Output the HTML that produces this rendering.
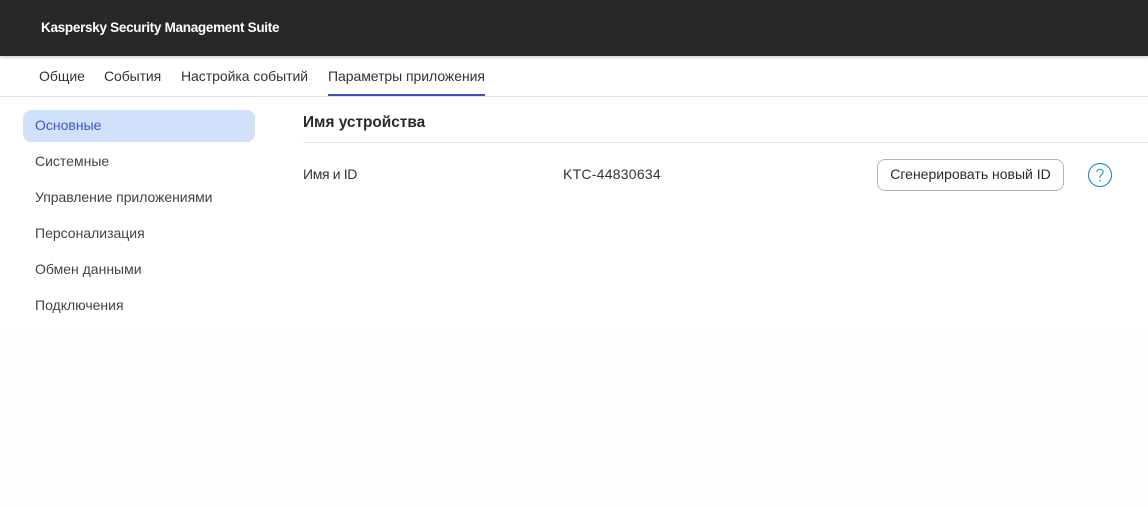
<!DOCTYPE html>
<html><head><meta charset="utf-8">
<style>
html,body{margin:0;padding:0;width:1148px;height:507px;overflow:hidden;background:#fdfdfd;font-family:"Liberation Sans","Noto Sans CJK SC",sans-serif;}
div{position:absolute;white-space:nowrap;}
.t{font-size:14px;line-height:20px;color:#333;}
.m{font-size:14px;line-height:20px;color:#444;left:35px;}
</style></head><body>
<div style="left:0;top:0;width:1148px;height:56px;background:#282828;box-shadow:0 1px 3px rgba(0,0,0,.25);z-index:2"></div>
<div style="left:41px;top:18px;font-size:13.5px;line-height:20px;color:#fff;font-weight:bold;letter-spacing:-.29px;z-index:3">Kaspersky Security Management Suite</div>
<div style="left:0;top:56px;width:1148px;height:40px;background:#fff;border-bottom:1px solid #dfdfe6"></div>
<div class="t" style="left:39px;top:66px;letter-spacing:-.03px">Общие</div>
<div class="t" style="left:104px;top:66px;letter-spacing:-.1px">События</div>
<div class="t" style="left:181px;top:66px;letter-spacing:-.05px">Настройка событий</div>
<div class="t" style="left:328px;top:66px;letter-spacing:-.05px">Параметры приложения</div>
<div style="left:328px;top:94px;width:157px;height:2px;background:#3a4fc0"></div>
<div style="left:0;top:97px;width:1148px;height:237px;background:#fff"></div>
<div style="left:23px;top:110px;width:232px;height:32px;background:#d2e1fb;border-radius:8px"></div>
<div class="m" style="top:115px;color:#3f55c4">Основные</div>
<div class="m" style="top:151px;">Системные</div>
<div class="m" style="top:187px;letter-spacing:-.05px">Управление приложениями</div>
<div class="m" style="top:223px">Персонализация</div>
<div class="m" style="top:259px">Обмен данными</div>
<div class="m" style="top:295px">Подключения</div>
<div style="left:303px;top:113px;font-size:15.4px;line-height:20px;font-weight:bold;color:#2a2a2a">Имя устройства</div>
<div style="left:303px;top:142px;width:845px;height:1px;background:#e6e6ee"></div>
<div class="t" style="left:303px;top:164px;letter-spacing:-.35px">Имя и ID</div>
<div class="t" style="left:563px;top:164px;letter-spacing:.25px">KTC-44830634</div>
<div style="left:877px;top:159px;width:185px;height:30px;border:1px solid #b4b4c4;border-radius:8px;background:#fff;text-align:center;font-size:14px;line-height:28px;color:#2a2a2a">Сгенерировать новый ID</div>
<svg style="position:absolute;left:1087px;top:162px" width="26" height="26" viewBox="0 0 26 26"><circle cx="13" cy="13" r="11.5" fill="none" stroke="#2b8fc9" stroke-width="1.2"/><path d="M9.8 10.2C9.8 8.4 11.2 7.3 13 7.3s3.2 1.1 3.2 2.8c0 2.4-3.2 2.7-3.2 5.2v.7" fill="none" stroke="#2b8fc9" stroke-width="1.1"/><circle cx="13" cy="18.6" r=".8" fill="#2b8fc9"/></svg>
</body></html>
